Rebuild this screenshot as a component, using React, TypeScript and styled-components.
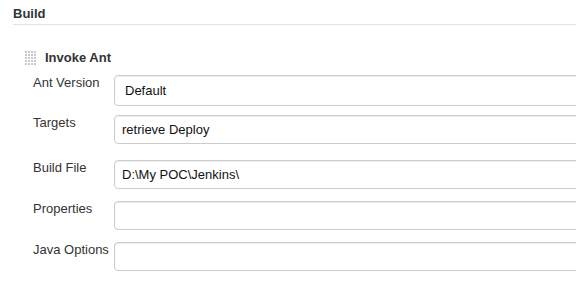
import { createGlobalStyle, styled } from "styled-components";

const GlobalStyle = createGlobalStyle`
  html, body {
    margin: 0;
    padding: 0;
    background: #fff;
  }
  body {
    font-family: "Liberation Sans", Arial, Helvetica, sans-serif;
    font-size: 13px;
    color: #333;
  }
`;

const Page = styled.div`
  width: 100%;
  overflow: hidden;
`;

const Section = styled.section`
  width: 640px;
  padding-left: 13px;
`;

const SectionHeader = styled.div`
  padding-top: 6px;
  padding-bottom: 2px;
  line-height: 16px;
  font-weight: bold;
  color: #333;
  border-bottom: 1px solid #e2e2e2;
`;

const StepTitle = styled.div`
  display: flex;
  align-items: center;
  gap: 9px;
  margin-top: 25px;
  padding-left: 12px;
  height: 16px;
  line-height: 16px;
  font-weight: bold;
  color: #333;
`;

const Grip = styled.svg`
  display: block;
  width: 11px;
  height: 14px;
  flex: none;
`;

const FieldRow = styled.div<{ $gap: number }>`
  display: grid;
  grid-template-columns: 81px 1fr;
  margin-top: ${({ $gap }) => $gap}px;
  padding-left: 20px;
`;

const Label = styled.label`
  line-height: 14px;
  padding-top: 1px;
  color: #333;
  white-space: nowrap;
`;

const TextInput = styled.input`
  box-sizing: border-box;
  width: 100%;
  height: 29px;
  margin: 0;
  padding: 0 7px;
  font-family: "Liberation Sans", Arial, sans-serif;
  font-size: 13px;
  color: #111;
  background: #fff;
  border: 1px solid #ccc;
  border-radius: 4px;
  box-shadow: inset 0 1px 1px rgba(0, 0, 0, 0.075);
  outline: none;
`;

const Select = styled.select`
  box-sizing: border-box;
  width: 100%;
  height: 31px;
  margin: 0;
  padding: 0 10px;
  appearance: none;
  font-family: "Liberation Sans", Arial, sans-serif;
  font-size: 13px;
  color: #111;
  background: #fff;
  border: 1px solid #ccc;
  border-radius: 4px;
  box-shadow: inset 0 1px 1px rgba(0, 0, 0, 0.075);
  outline: none;
`;

function GripIcon() {
  const dots = [];
  for (let r = 0; r < 5; r++) {
    for (let c = 0; c < 4; c++) {
      dots.push(<rect key={`${r}-${c}`} x={c * 3} y={r * 3} width="2" height="2" fill="#c8c8c8" />);
    }
  }
  return (
    <Grip viewBox="0 0 11 14" aria-hidden="true">
      {dots}
    </Grip>
  );
}

const fields = [
  { label: "Targets", value: "retrieve Deploy", gap: 9 },
  { label: "Build File", value: "D:\\My POC\\Jenkins\\", gap: 16 },
  { label: "Properties", value: "", gap: 12 },
  { label: "Java Options", value: "", gap: 12 },
];

export default function App() {
  return (
    <Page>
      <GlobalStyle />
      <Section>
        <SectionHeader>Build</SectionHeader>
        <StepTitle>
          <GripIcon />
          Invoke Ant
        </StepTitle>
        <FieldRow $gap={9}>
          <Label>Ant Version</Label>
          <Select defaultValue="Default">
            <option>Default</option>
          </Select>
        </FieldRow>
        {fields.map((f) => (
          <FieldRow key={f.label} $gap={f.gap}>
            <Label>{f.label}</Label>
            <TextInput defaultValue={f.value} />
          </FieldRow>
        ))}
      </Section>
    </Page>
  );
}
